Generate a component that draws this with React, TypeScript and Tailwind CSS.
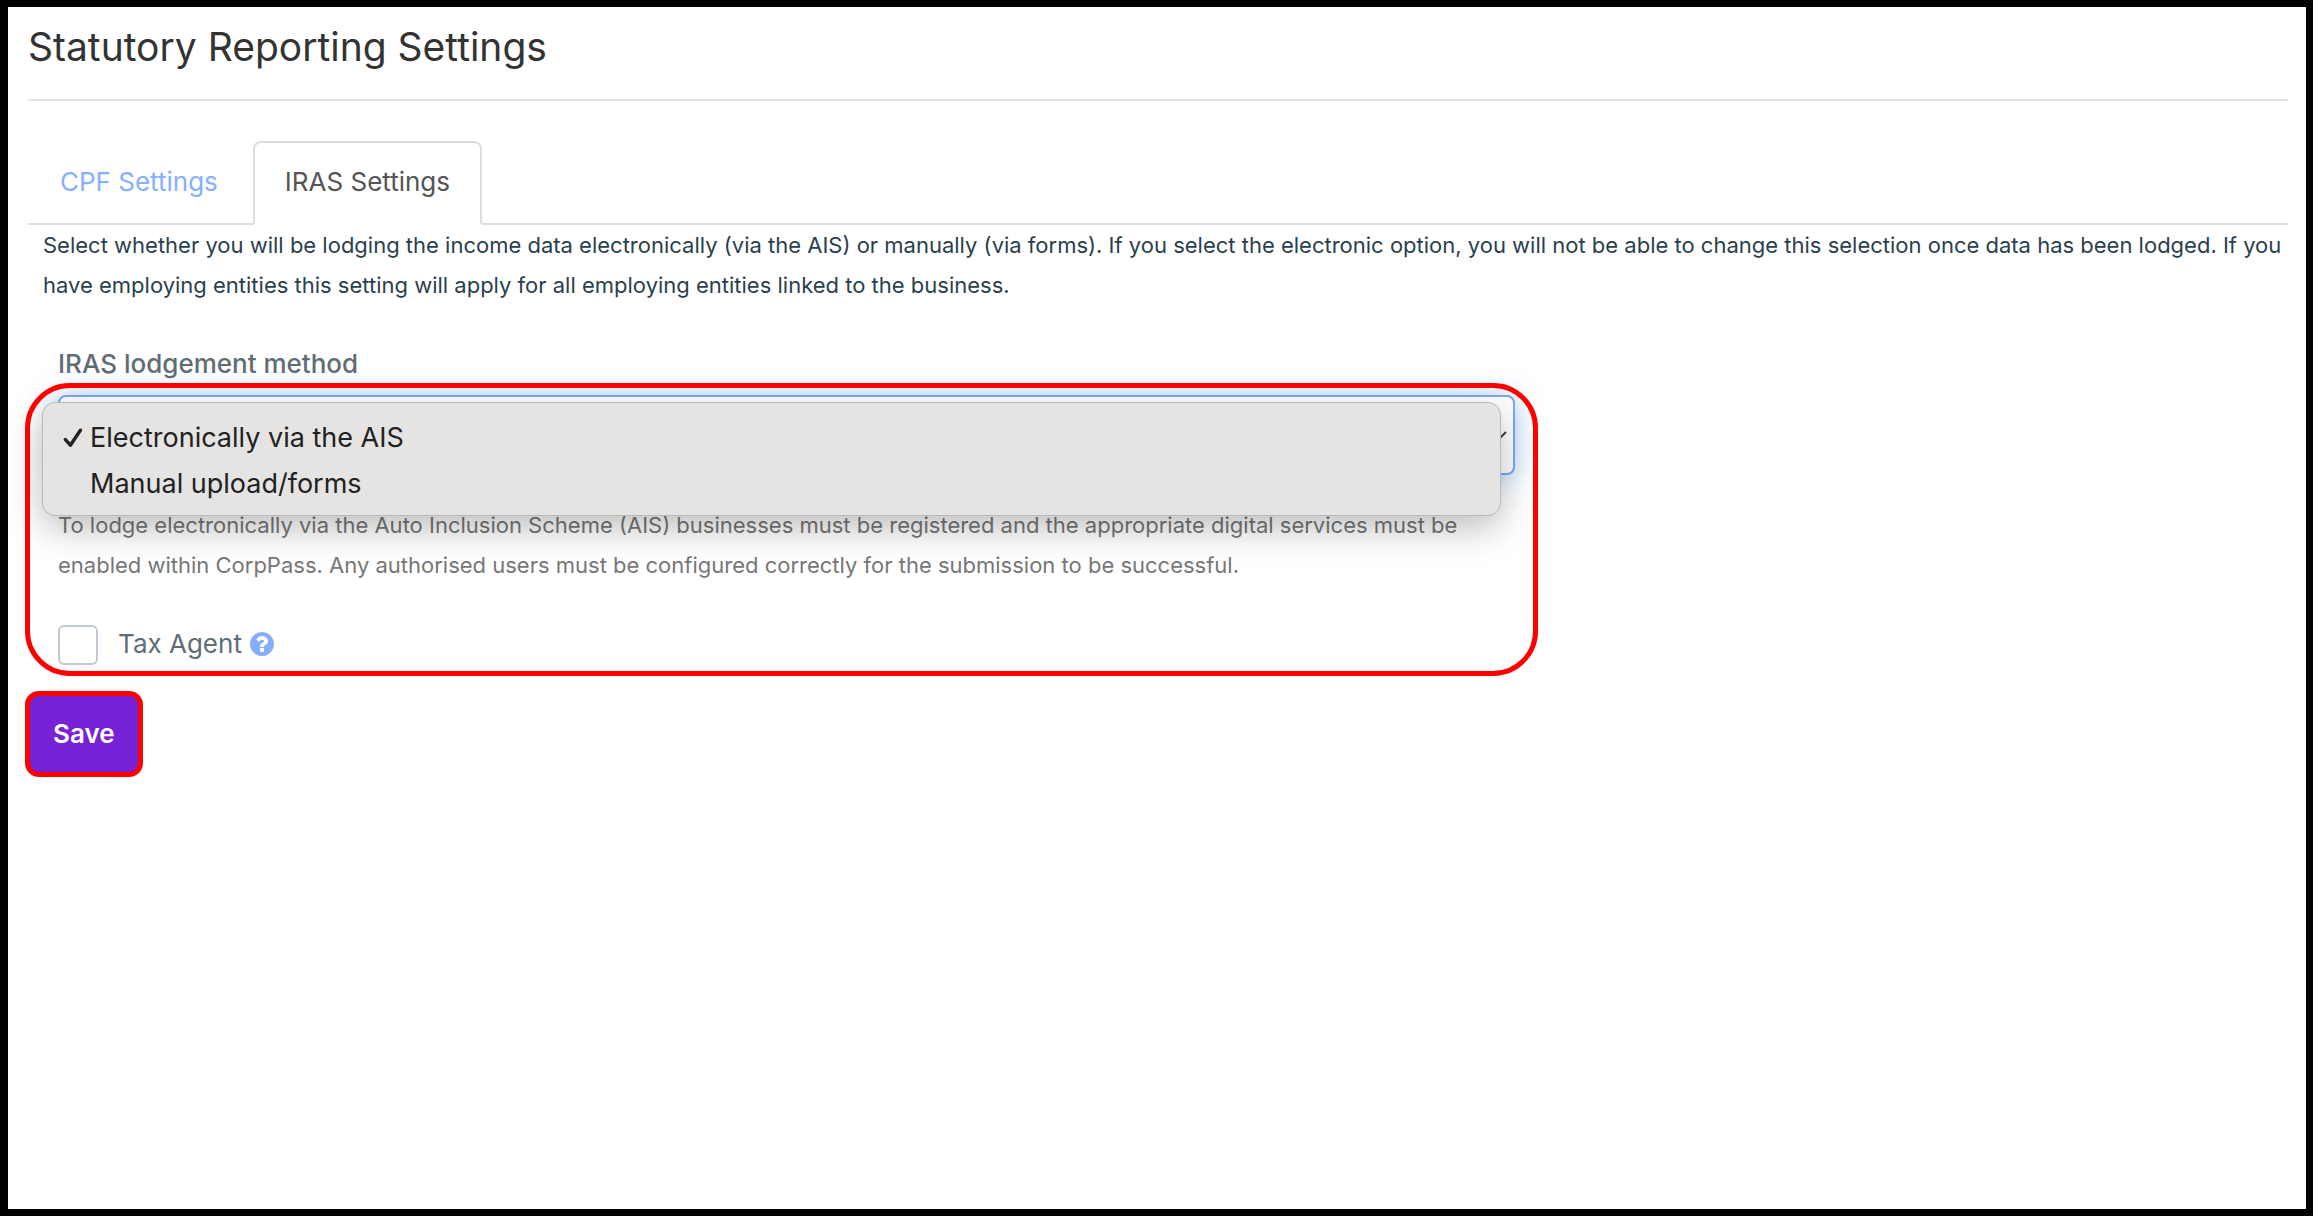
import { useState } from "react";

const METHODS = [
  { value: "ais", label: "Electronically via the AIS" },
  { value: "manual", label: "Manual upload/forms" },
];

function CheckIcon() {
  return (
    <svg viewBox="0 0 20 20" className="h-5 w-5" fill="none" stroke="currentColor" strokeWidth="3.4" strokeLinecap="round" strokeLinejoin="round" aria-hidden="true">
      <path d="M2.4 11.6 7.4 17.2 17.4 2.2" />
    </svg>
  );
}

function HelpIcon() {
  return (
    <svg viewBox="128 128 1536 1536" className="h-6 w-6" fill="currentColor" aria-hidden="true">
      <path d="M1024 1376v-192q0-14-9-23t-23-9h-192q-14 0-23 9t-9 23v192q0 14 9 23t23 9h192q14 0 23-9t9-23zm256-672q0-88-55.5-163t-138.5-116-170-41q-243 0-371 213-15 24 8 42l132 100q7 6 19 6 16 0 25-12 53-68 86-92 34-24 86-24 48 0 85.5 26t37.5 59q0 38-20 61t-68 45q-63 28-115.5 86.5t-52.5 125.5v36q0 14 9 23t23 9h192q14 0 23-9t9-23q0-19 21.5-49.5t54.5-49.5q32-18 49-28.5t46-35 44.5-48 28-60.5 12.5-81zm384 192q0 209-103 385.5t-279.5 279.5-385.5 103-385.5-103-279.5-279.5-103-385.5 103-385.5 279.5-279.5 385.5-103 385.5 103 279.5 279.5 103 385.5z" />
    </svg>
  );
}

function MethodSelect({ value, onChange }: { value: string; onChange: (v: string) => void }) {
  return (
    <div className="relative">
      <select
        id="lodgement-method"
        value={value}
        onChange={(e) => onChange(e.target.value)}
        className="block h-20 w-full appearance-none rounded-lg border-2 border-[#7ba7fb] bg-white px-6 text-[26px] text-[#555555] shadow-[0_2px_28px_rgba(90,165,235,0.5)] outline-none"
      >
        {METHODS.map((m) => (
          <option key={m.value} value={m.value}>
            {m.label}
          </option>
        ))}
      </select>
      <svg viewBox="0 0 16 10" className="pointer-events-none absolute top-9 right-2 h-[10px] w-4" fill="none" stroke="#444444" strokeWidth="2" aria-hidden="true">
        <path d="M1 1l7 7 7-7" />
      </svg>
      <ul
        role="listbox"
        aria-label="IRAS lodgement method options"
        className="absolute top-[7px] right-[14px] -left-4 rounded-[13px] border border-[#b9b9b8] bg-[#e5e4e2] pt-3 pb-2 text-[27px] leading-[46px] text-[#222222] shadow-[0_12px_36px_rgba(0,0,0,0.26)]"
      >
        {METHODS.map((m) => (
          <li
            key={m.value}
            role="option"
            aria-selected={m.value === value}
            onClick={() => onChange(m.value)}
            className="flex items-center gap-[7px] pl-5"
          >
            <span className="w-5">{m.value === value && <CheckIcon />}</span>
            {m.label}
          </li>
        ))}
      </ul>
    </div>
  );
}

export default function App() {
  const [method, setMethod] = useState("ais");
  const [agent, setAgent] = useState(false);

  return (
    <main className="min-h-screen border-[7px] border-l-8 border-black bg-white font-['Inter',sans-serif]">
      <header className="mr-[18px] ml-5 border-b-2 border-[#e5e5e5] pt-3 pb-6">
        <h1 className="text-[39px] leading-[56px] text-[#333333]">Statutory Reporting Settings</h1>
      </header>

      <nav className="mt-10 mr-[18px] ml-5 flex gap-[3px] border-b-2 border-[#dddddd] text-[26px] leading-[78px]">
        <a href="#cpf" className="-mb-[2px] border-2 border-transparent px-[30px] pb-[2px] text-[#85b0ff]">
          CPF Settings
        </a>
        <a href="#iras" aria-current="page" className="-mb-[2px] rounded-t-lg border-2 border-[#dddddd] border-b-white bg-white px-[30px] pb-[2px] text-[#555555]">
          IRAS Settings
        </a>
      </nav>

      <p className="mr-[18px] ml-[35px] text-[22px] leading-10 text-[#2a3f4d]">
        Select whether you will be lodging the income data electronically (via the AIS) or manually (via forms). If you
        select the electronic option, you will not be able to change this selection once data has been lodged. If you
        have employing entities this setting will apply for all employing entities linked to the business.
      </p>

      <form className="mt-10 pr-3 pl-[17px]" onSubmit={(e) => e.preventDefault()}>
        <label htmlFor="lodgement-method" className="ml-[33px] block text-[26px] leading-[38px] font-medium text-[#5f6d76]">
          IRAS lodgement method
        </label>
        <div className="relative w-2/3 pt-3 pr-[23px] pb-[11px] pl-[33px]">
          <MethodSelect value={method} onChange={setMethod} />
          <p className="mt-[30px] pr-4 text-[22px] leading-10 text-[#777777]">
            To lodge electronically via the Auto Inclusion Scheme (AIS) businesses must be registered and the
            appropriate digital services must be enabled within CorpPass. Any authorised users must be configured
            correctly for the submission to be successful.
          </p>
          <div className="mt-10 flex h-10">
            <input
              id="tax-agent"
              type="checkbox"
              checked={agent}
              onChange={(e) => setAgent(e.target.checked)}
              className="h-10 w-10 appearance-none rounded-md border-2 border-[#bfcad4] bg-white checked:bg-[#85adff]"
            />
            <div className="ml-5 flex h-[38px] items-center gap-2">
              <label htmlFor="tax-agent" className="text-[26px] leading-[38px] text-[#5f6d76]">
                Tax Agent
              </label>
              <button type="button" aria-label="Help about Tax Agent" className="text-[#85adff]">
                <HelpIcon />
              </button>
            </div>
          </div>
          <div className="pointer-events-none absolute inset-0 z-10 rounded-[45px] border-[5px] border-[#ff0000]" />
        </div>
        <button
          type="submit"
          className="mt-[15px] block rounded-[14px] border-[5px] border-[#ff0000] bg-[#7722d6] px-[23px] text-[26px] leading-[76px] font-semibold text-white"
        >
          Save
        </button>
      </form>
    </main>
  );
}
